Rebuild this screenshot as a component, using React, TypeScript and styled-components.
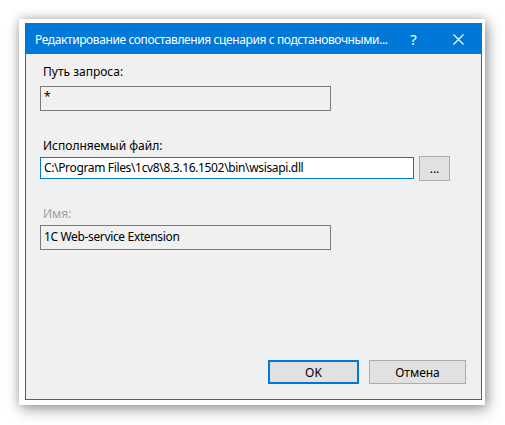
import styled, { createGlobalStyle } from 'styled-components'

const GlobalStyle = createGlobalStyle`
    html, body {
        margin: 0;
        padding: 0;
        background: #ffffff;
    }
    * {
        box-sizing: border-box;
    }
`

const Page = styled.div`
    width: 505px;
    height: 425px;
    padding: 19px 0 0 19px;
    font-family: "Noto Sans", "Liberation Sans", sans-serif;
    font-size: 12px;
`

const Frame = styled.div`
    width: 466px;
    height: 386px;
    background: #ffffff;
    padding: 4px 4px 5px 6px;
    box-shadow: 0 0 10px rgba(0, 0, 0, 0.25), 3px 5px 14px rgba(0, 0, 0, 0.3);
`

const Window = styled.div`
    width: 457px;
    height: 377px;
    border: 1px solid #0078d7;
    display: flex;
    flex-direction: column;
    background: #f0f0f0;
`

const TitleBar = styled.div`
    height: 30px;
    flex: 0 0 30px;
    background: #0078d7;
    color: #ffffff;
    display: flex;
    align-items: center;
    padding-left: 9px;
`

const Title = styled.div`
    flex: 1;
    min-width: 0;
    overflow: hidden;
    white-space: nowrap;
    letter-spacing: -0.4px;
`

const TitleButton = styled.div`
    flex: 0 0 45px;
    height: 30px;
    display: flex;
    align-items: center;
    justify-content: center;
    font-size: 15px;
    color: #ffffff;
`

const Body = styled.div`
    flex: 1;
    display: flex;
    flex-direction: column;
    padding: 10px 15px 15px 14px;
`

const Label = styled.div<{ $disabled?: boolean; $gap: number }>`
    height: 16px;
    line-height: 16px;
    margin-top: ${({ $gap }) => $gap}px;
    padding-left: 3px;
    color: ${({ $disabled }) => ($disabled ? '#a0a0a0' : '#000000')};
`

const Field = styled.div<{ $focused?: boolean; $readOnly?: boolean; $width: number; $height: number; $gap: number }>`
    width: ${({ $width }) => $width}px;
    height: ${({ $height }) => $height}px;
    margin-top: ${({ $gap }) => $gap}px;
    border: 1px solid ${({ $focused }) => ($focused ? '#0078d7' : '#7a7a7a')};
    background: ${({ $readOnly }) => ($readOnly ? '#f0f0f0' : '#ffffff')};
    color: #000000;
    padding: 0 3px;
    display: flex;
    align-items: ${({ $readOnly }) => ($readOnly ? 'flex-start' : 'center')};
    white-space: nowrap;
    line-height: 16px;
    letter-spacing: -0.35px;
`

const FieldText = styled.span<{ $top: number }>`
    padding-top: ${({ $top }) => $top}px;
`

const Row = styled.div`
    display: flex;
    align-items: flex-start;
    gap: 5px;
    margin-top: 2px;
`

const Button = styled.div<{ $default?: boolean; $width: number; $height: number }>`
    width: ${({ $width }) => $width}px;
    height: ${({ $height }) => $height}px;
    background: #e1e1e1;
    border: ${({ $default }) => ($default ? '2px solid #0078d7' : '1px solid #adadad')};
    display: flex;
    align-items: center;
    justify-content: center;
    color: #000000;
`

const Footer = styled.div`
    margin-top: auto;
    display: flex;
    justify-content: flex-end;
    gap: 10px;
`

export default function App() {
    return (
        <Page>
            <GlobalStyle />
            <Frame>
                <Window>
                    <TitleBar>
                        <Title>Редактирование сопоставления сценария с подстановочными...</Title>
                        <TitleButton>?</TitleButton>
                        <TitleButton>
                            <svg width="11" height="11" viewBox="0 0 11 11">
                                <path d="M0.5 0.5 L10.5 10.5 M10.5 0.5 L0.5 10.5" stroke="#ffffff" strokeWidth="1.1" fill="none" />
                            </svg>
                        </TitleButton>
                    </TitleBar>
                    <Body>
                        <Label $gap={0}>Путь запроса:</Label>
                        <Field $readOnly $width={291} $height={25} $gap={6}>
                            <FieldText $top={2}>*</FieldText>
                        </Field>

                        <Label $gap={27}>Исполняемый файл:</Label>
                        <Row>
                            <Field $focused $width={374} $height={22} $gap={1}>
                                <FieldText $top={0}>C:\Program Files\1cv8\8.3.16.1502\bin\wsisapi.dll</FieldText>
                            </Field>
                            <Button $width={31} $height={25}>...</Button>
                        </Row>

                        <Label $disabled $gap={25}>Имя:</Label>
                        <Field $readOnly $width={291} $height={25} $gap={3}>
                            <FieldText $top={3}>1C Web-service Extension</FieldText>
                        </Field>

                        <Footer>
                            <Button $default $width={91} $height={24}>OK</Button>
                            <Button $width={97} $height={24}>Отмена</Button>
                        </Footer>
                    </Body>
                </Window>
            </Frame>
        </Page>
    )
}
